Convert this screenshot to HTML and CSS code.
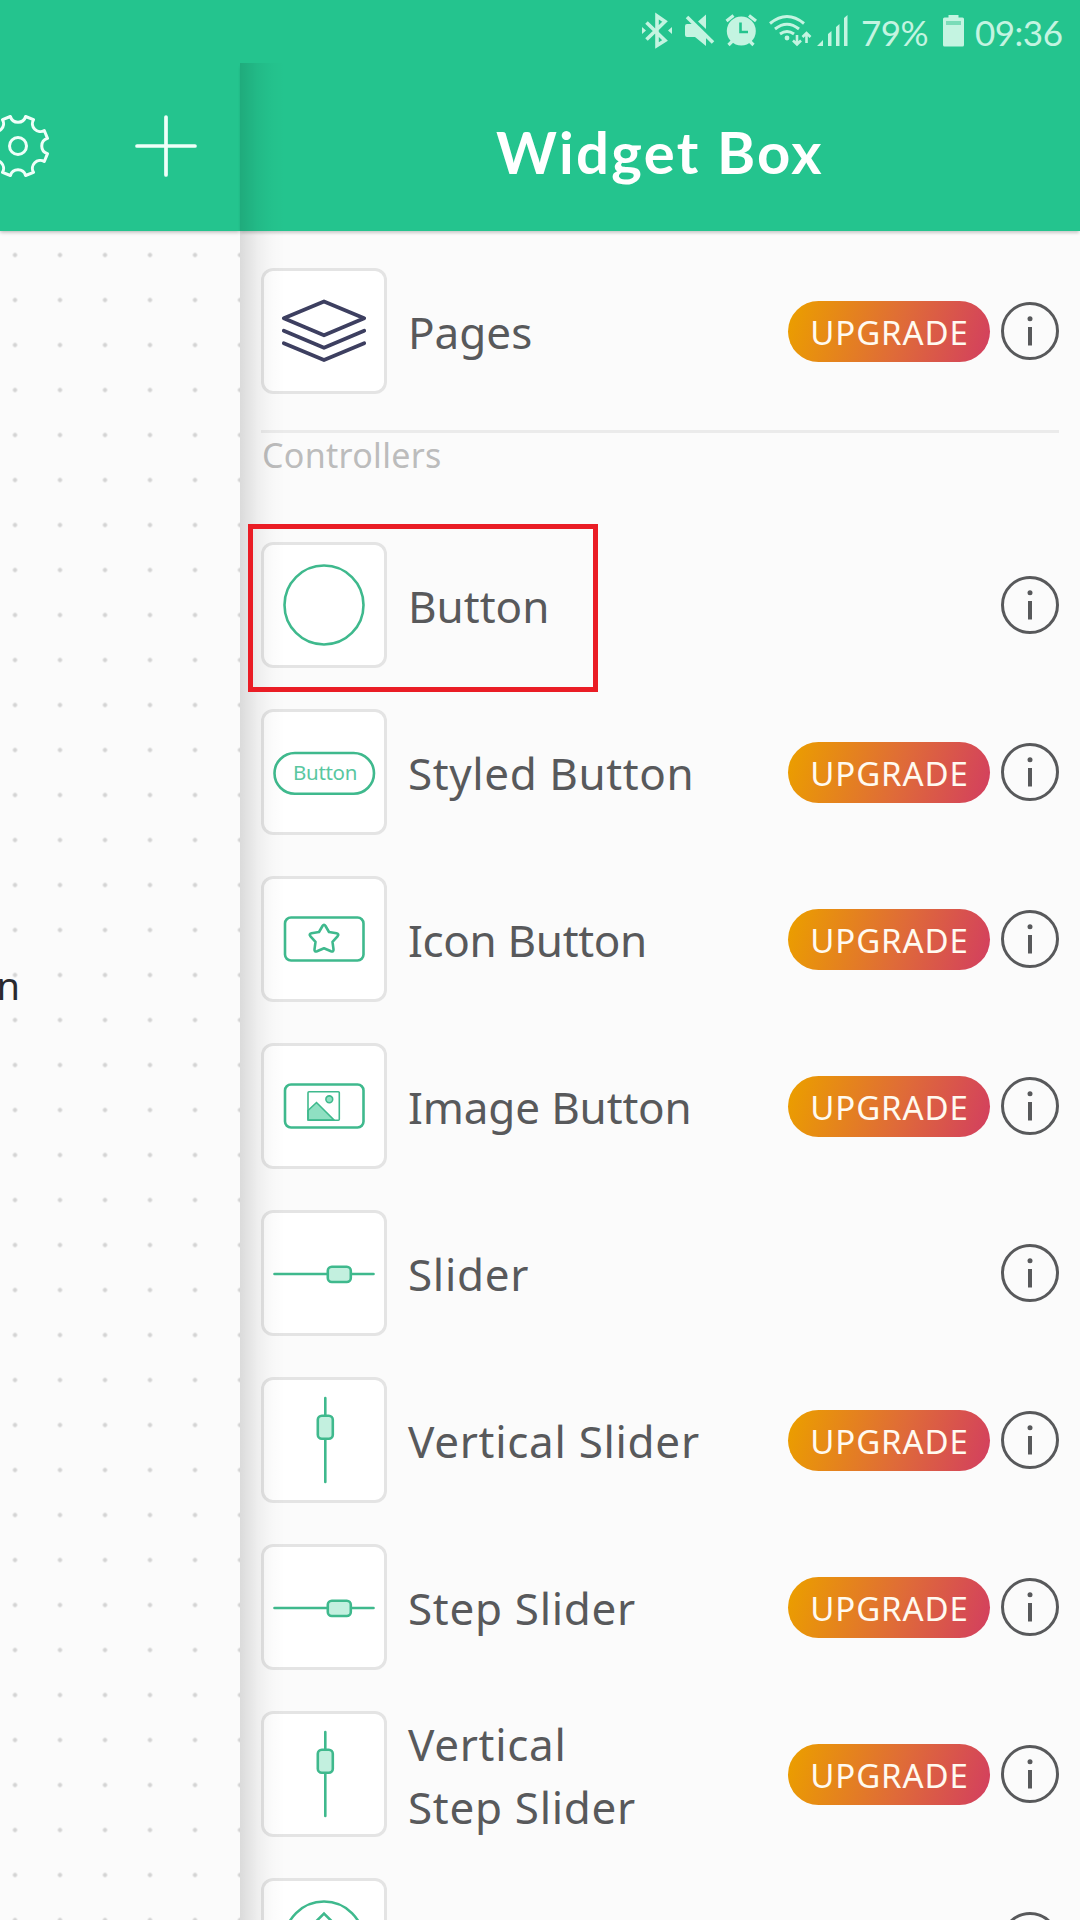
FILE: index.html
```html
<!DOCTYPE html>
<html lang="en">
<head>
<meta charset="utf-8">
<title>Widget Box</title>
<link rel="stylesheet" href="styles.css">
</head>
<body>
<svg class="defs" aria-hidden="true">
  <symbol id="info" viewBox="0 0 58 58"><circle cx="29" cy="29" r="27.5" fill="none" stroke="#58595b" stroke-width="3"/><circle cx="29" cy="16.7" r="2.5" fill="#58595b"/><path d="M29 25v18.5" stroke="#58595b" stroke-width="4"/></symbol>
  <symbol id="hslider" viewBox="0 0 126 126"><path d="M13.5 64h99" stroke-linecap="round"/><rect x="66.8" y="56.8" width="23" height="15.2" rx="4" class="soft"/></symbol>
  <symbol id="vslider" viewBox="0 0 126 126"><path d="M64.3 21v84" stroke-linecap="round"/><rect x="56.8" y="38.8" width="15" height="23" rx="4" class="soft"/></symbol>
</svg>
<div class="screen">
  <div class="status">
    <svg class="bt" viewBox="641 0 32 63"><path d="M646.5 22.5L665 40.500 657 45.500V16L665 21.500 646.500 39.500" fill="none" stroke-width="3.6" stroke="currentColor"/><path d="M642 27v7l4-3.500zM672 27v7l-4-3.500z"/></svg>
    <svg class="mute" viewBox="684 0 31 63"><path d="M685 26q0-2 2-2h6l13 13v9l-11-9h-8q-2 0-2-2zM698 21.500l8-7v14.500z"/><path d="M687 17l26 25.500" stroke="currentColor" stroke-width="3.600"/></svg>
    <svg class="alarm" viewBox="725 0 33 63"><circle cx="741.300" cy="31" r="14.500"/><path d="M726.500 21l7-5.500M756 21l-7-5.500M728.500 45l5-5M753.500 45l-5-5" stroke="currentColor" stroke-width="3.200"/><path d="M740.500 22.500v9.500h7.500" fill="none" stroke="#24c48e" stroke-width="2.600"/></svg>
    <svg class="wifi" viewBox="768 0 44 63"><g fill="none" stroke="currentColor" stroke-width="3"><path d="M770 23.500q17-14 34 0M775 29q12-9.500 24 0M780 34q7-5 14 0"/><path d="M797 35v9M793 40.500l4 4 4-4M806.500 43V34M802.500 37l4-4 4 4" stroke-width="2.600"/></g><circle cx="787" cy="38" r="2.400"/></svg>
    <svg class="signal" viewBox="816 0 33 63"><path d="M817 46l6-6v6zM828 34l3.500-3v15H828zM836 27l3.500-3v22H836zM844 18l3.500-3v31H844z"/></svg>
    <span class="pct">79%</span>
    <svg class="battery" viewBox="943 0 21 63"><path d="M944.500 17.500h4V15h10v2.500h4q1.500 0 1.500 1.500v26q0 1.500-1.500 1.500h-18q-1.500 0-1.500-1.500V19q0-1.500 1.500-1.500z"/><path d="M946 21h15v4h-15z" fill="#7adcb8"/></svg>
    <span class="clock">09:36</span>
  </div>
  <div class="main">
    <section class="workspace">
      <div class="toolbar">
        <svg class="gear" viewBox="-18 -33 51 66"><g fill="none" stroke="#effff9" stroke-width="3" stroke-linejoin="round"><path d="M-7.600-29.500A7.900 7.900 0 0 0 7.600-29.500L15.500-26.300A7.900 7.900 0 0 0 26.300-15.500L29.500-7.600A7.900 7.900 0 0 0 29.500 7.600L26.300 15.500A7.900 7.900 0 0 0 15.500 26.300L7.600 29.500A7.900 7.900 0 0 0-7.600 29.500L-15.500 26.300A7.900 7.900 0 0 0-26.300 15.500L-29.500 7.600A7.900 7.900 0 0 0-29.500-7.600L-26.300-15.500A7.900 7.900 0 0 0-15.500-26.300Z"/><circle r="8.500"/></g></svg>
        <svg class="plus" viewBox="0 0 62 62"><path d="M2 31h58M31 2v58" stroke="#effff9" stroke-width="3.700" stroke-linecap="round"/></svg>
      </div>
      <div class="canvas"><span class="cut">n</span></div>
    </section>
    <aside class="drawer">
      <h1 class="title"><span>Widget Box</span></h1>
      <div class="list">
        <div class="row">
          <svg class="tile" viewBox="0 0 126 126"><g stroke="#3d3f60" stroke-width="3.800" stroke-linejoin="round" stroke-linecap="round"><path d="M22.800 50.300L63 33.500l40.200 16.800L63 67.300zM22.800 62.700L63 79.800l40.200-17.100M22.800 75.300L63 92l40.200-16.700"/></g></svg>
          <span class="label pages">Pages</span><span class="upgrade">UPGRADE</span><svg class="info"><use href="#info"/></svg>
        </div>
        <h2 class="group">Controllers</h2>
        <div class="rows">
          <div class="row marked">
            <svg class="tile" viewBox="0 0 126 126"><circle cx="63" cy="63" r="39.500"/></svg>
            <span class="label btn">Button</span><svg class="info"><use href="#info"/></svg>
          </div>
          <div class="row">
            <svg class="tile" viewBox="0 0 126 126"><rect x="13.500" y="44" width="99.500" height="40.700" rx="20.350"/><text x="32" y="70.500">Button</text></svg>
            <span class="label styled">Styled Button</span><span class="upgrade">UPGRADE</span><svg class="info"><use href="#info"/></svg>
          </div>
          <div class="row">
            <svg class="tile" viewBox="0 0 126 126"><rect x="24" y="41.500" width="78.500" height="43" rx="6"/><path d="M61.500 50q1.500-2.500 3 0l3.500 6 7.500 1.300q3 .7 1 3l-5 5.500 1 7.500q.2 3-2.500 2l-7-3-7 3q-2.700 1-2.500-2l1-7.500-5-5.500q-2-2.300 1-3L58 56z" stroke-linejoin="round"/></svg>
            <span class="label icon">Icon Button</span><span class="upgrade">UPGRADE</span><svg class="info"><use href="#info"/></svg>
          </div>
          <div class="row">
            <svg class="tile" viewBox="0 0 126 126"><rect x="24" y="41.500" width="78.500" height="43" rx="6"/><g stroke-width="1.600"><path class="mint" d="M47 67.500l8.500-8L73 77H47z"/><rect x="47" y="48.700" width="31.300" height="28.600" rx="1"/><circle class="mint" cx="68.300" cy="56.300" r="3.400"/></g></svg>
            <span class="label image">Image Button</span><span class="upgrade">UPGRADE</span><svg class="info"><use href="#info"/></svg>
          </div>
          <div class="row">
            <svg class="tile" viewBox="0 0 126 126"><use href="#hslider"/></svg>
            <span class="label slider">Slider</span><svg class="info"><use href="#info"/></svg>
          </div>
          <div class="row">
            <svg class="tile" viewBox="0 0 126 126"><use href="#vslider"/></svg>
            <span class="label slider">Vertical Slider</span><span class="upgrade">UPGRADE</span><svg class="info"><use href="#info"/></svg>
          </div>
          <div class="row">
            <svg class="tile" viewBox="0 0 126 126"><use href="#hslider"/></svg>
            <span class="label slider">Step Slider</span><span class="upgrade">UPGRADE</span><svg class="info"><use href="#info"/></svg>
          </div>
          <div class="row">
            <svg class="tile" viewBox="0 0 126 126"><use href="#vslider"/></svg>
            <span class="label slider">Vertical<br>Step Slider</span><span class="upgrade">UPGRADE</span><svg class="info"><use href="#info"/></svg>
          </div>
          <div class="row">
            <svg class="tile" viewBox="0 0 126 126"><circle cx="63" cy="63" r="39.500"/><path d="M53 45.500l10-10 10 10"/></svg>
            <span class="label"></span><svg class="info"><use href="#info"/></svg>
          </div>
        </div>
      </div>
    </aside>
  </div>
</div>
</body>
</html>
```
FILE: styles.css
```css
*, *::before, *::after { box-sizing: border-box; margin: 0; padding: 0; }
body { width: 1080px; height: 1920px; overflow: hidden; background: #fbfbfb; font-family: "Noto Sans", sans-serif; }
svg { display: block; flex: none; }
.defs { position: absolute; width: 0; height: 0; }
.screen { height: 1920px; display: flex; flex-direction: column; overflow: hidden; }

.status { position: relative; z-index: 4; height: 63px; flex: none; display: flex; align-items: center; justify-content: flex-end; padding-right: 17px; background: #24c48e; color: #c4f4e1; font-family: Lato, sans-serif; font-size: 35px; line-height: 63px; white-space: nowrap; }
.status svg { height: 63px; fill: currentColor; }
.bt { width: 32px; margin-right: 11px; }
.mute { width: 31px; margin-right: 10px; }
.alarm { width: 33px; margin-right: 10px; }
.wifi { width: 44px; margin-right: 4px; }
.signal { width: 33px; margin-right: 12px; }
.pct { width: 82px; padding-top: 2px; letter-spacing: -0.5px; }
.battery { width: 21px; margin-right: 11px; }
.clock { width: 88px; padding-top: 2px; letter-spacing: -0.5px; }

.main { flex: 1; min-height: 0; display: flex; }
.workspace { width: 240px; flex: none; display: flex; flex-direction: column; }
.toolbar { height: 168px; flex: none; display: flex; align-items: center; gap: 84px; padding-bottom: 2px; background: #24c48e; box-shadow: 0 1px 4px rgba(0, 0, 0, .3); z-index: 1; }
.gear { width: 51px; height: 66px; }
.plus { width: 62px; height: 62px; }
.canvas { flex: 1; padding-top: 726px; overflow: hidden; background: radial-gradient(circle at 50% 50%, #d4d4d4 1.8px, transparent 2.5px) -7.5px 1.5px / 45px 45px #fbfbfb; }
.cut { display: block; width: 20px; direction: rtl; font-size: 38px; line-height: 56px; color: #29292e; }

.drawer { flex: 1; min-width: 0; display: flex; flex-direction: column; position: relative; z-index: 2; }
.drawer::before { content: ""; position: absolute; z-index: 2; left: 0; top: 0; bottom: 0; width: 45px; background: linear-gradient(90deg, rgba(0, 0, 0, .13), rgba(0, 0, 0, .05) 40%, rgba(0, 0, 0, .015) 70%, transparent); }
.title { height: 168px; flex: none; display: flex; align-items: center; justify-content: center; padding-top: 10px; background: #24c48e; box-shadow: 0 3px 3px -1px rgba(0, 0, 0, .2); font: 700 58px/70px Lato, sans-serif; color: #fff; letter-spacing: 2.3px; }
.list { flex: 1; min-height: 0; overflow: hidden; padding: 37px 21px 0; }
.row { height: 126px; display: flex; align-items: center; position: relative; }
.rows { display: flex; flex-direction: column; gap: 41px; }
.tile { width: 126px; height: 126px; border-radius: 12px; background: #fff; box-shadow: inset 0 0 0 3px #e4e4e4; fill: none; stroke: #3fb98d; stroke-width: 2.6px; }
.tile text { fill: #59c7a0; stroke: none; font-size: 20.5px; letter-spacing: -.3px; }
.soft { fill: #c3f0df; }
.mint { fill: #8fe0c2; }
.label { flex: 1; padding: 3px 0 0 21px; font-size: 44px; line-height: 63px; color: #58595b; white-space: nowrap; }
.label.styled { letter-spacing: .6px; }
.label.icon { letter-spacing: -.35px; }
.label.image { letter-spacing: -.15px; }
.label.slider { letter-spacing: .7px; }
.upgrade { width: 202px; height: 61px; margin: 1px 11px 0 0; padding: 1px 0 0 1px; border-radius: 31px; background: linear-gradient(107deg, #eb9d00 3%, #df6b38 55%, #d3405e 98%); color: #fffaf0; font-size: 33px; line-height: 61px; text-align: center; letter-spacing: .9px; }
.info { width: 58px; height: 58px; }
.group { height: 112px; margin-top: 36px; padding-left: 1px; border-top: 3px solid #ebebeb; font-size: 34px; font-weight: 400; line-height: 44px; color: #bcbcbc; letter-spacing: .3px; }
.marked::after { content: ""; position: absolute; left: -13px; top: -18px; width: 350px; height: 168px; border: 5px solid #ea1d25; z-index: 3; }
```
